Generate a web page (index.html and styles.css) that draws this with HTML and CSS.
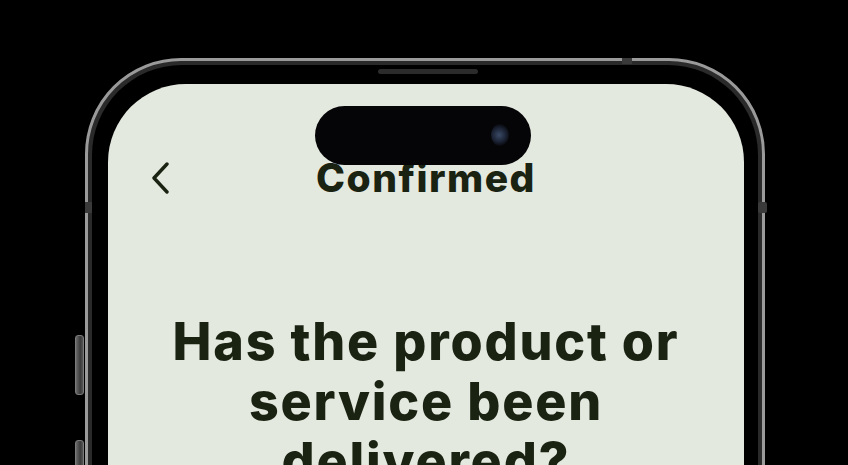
FILE: index.html
```html
<!DOCTYPE html>
<html>
<head>
<meta charset="utf-8">
<link rel="stylesheet" href="styles.css">
</head>
<body>
<div class="stage">
  <div class="phone">
    <span class="btn btn-action"></span>
    <span class="btn btn-vol"></span>
    <span class="ant ant-left"></span>
    <span class="ant ant-right"></span>
    <span class="ant ant-top"></span>
    <div class="band">
      <div class="bezel">
        <span class="speaker"></span>
        <div class="screen">
          <div class="island"><span class="lens"></span></div>
          <header class="nav">
            <svg class="back" viewBox="0 0 20 32" width="20" height="32"><path d="M17 2 L4 16 L17 30" fill="none" stroke="#1a2212" stroke-width="3.4" stroke-linecap="round" stroke-linejoin="round"/></svg>
            <h1 class="title">Confirmed</h1>
            <span class="spacer"></span>
          </header>
          <h2 class="question">Has the product or service been delivered?</h2>
        </div>
      </div>
    </div>
  </div>
</div>
</body>
</html>
```
FILE: styles.css
```css
html, body {
  margin: 0;
  padding: 0;
  background: #000;
  height: 100%;
  overflow: hidden;
}
.stage {
  padding: 58px 0 0 85px;
}
.phone {
  position: relative;
  width: 680px;
  height: 700px;
  box-sizing: border-box;
  border: 3px solid #9a9a9a;
  border-radius: 96px;
  background: #2a2a2a;
}
.band {
  margin: 4px;
  height: calc(100% - 8px);
  background: #000;
  border-radius: 90px;
  box-sizing: border-box;
  padding: 19px 14px 0 16px;
}
.bezel {
  position: relative;
  height: 100%;
}
.speaker {
  position: absolute;
  left: 270px;
  top: -15px;
  width: 100px;
  height: 5px;
  border-radius: 3px;
  background: #2b2b2b;
}
.screen {
  position: relative;
  height: 100%;
  background: #e4e9df;
  border-radius: 78px;
  font-family: "Inter", "Liberation Sans", sans-serif;
  color: #1a2212;
  text-align: center;
}
.island {
  position: absolute;
  left: 207px;
  top: 22px;
  width: 216px;
  height: 59px;
  border-radius: 30px;
  background: #050507;
  z-index: 2;
}
.lens {
  position: absolute;
  right: 22px;
  top: 18px;
  width: 18px;
  height: 22px;
  border-radius: 50%;
  background: radial-gradient(circle at 45% 50%, #3a4a66 0%, #1c2436 45%, #07080c 75%);
}
.nav {
  display: grid;
  grid-template-columns: 80px 1fr 80px;
  align-items: center;
  padding-top: 74px;
}
.back {
  justify-self: end;
  margin-right: 18px;
  display: block;
}
.title {
  margin: 0;
  font-size: 39px;
  font-weight: 800;
  line-height: 40px;
  letter-spacing: 1.5px;
}
.question {
  margin: 114px auto 0;
  width: 580px;
  font-size: 52px;
  font-weight: 800;
  line-height: 60px;
  letter-spacing: 1.8px;
}
.btn {
  position: absolute;
  left: -13px;
  width: 7px;
  border-radius: 3px;
  background: linear-gradient(90deg, #6a6a6a, #3a3a3a 60%, #555);
  border: 1px solid #7a7a7a;
}
.btn-action {
  top: 274px;
  height: 58px;
}
.btn-vol {
  top: 379px;
  height: 70px;
}
.ant {
  position: absolute;
  background: #3a3a3a;
}
.ant-left {
  left: -3px;
  top: 141px;
  width: 7px;
  height: 11px;
}
.ant-right {
  right: -5px;
  top: 141px;
  width: 9px;
  height: 11px;
  border-radius: 2px;
}
.ant-top {
  top: -3px;
  left: 534px;
  width: 10px;
  height: 6px;
}
```
